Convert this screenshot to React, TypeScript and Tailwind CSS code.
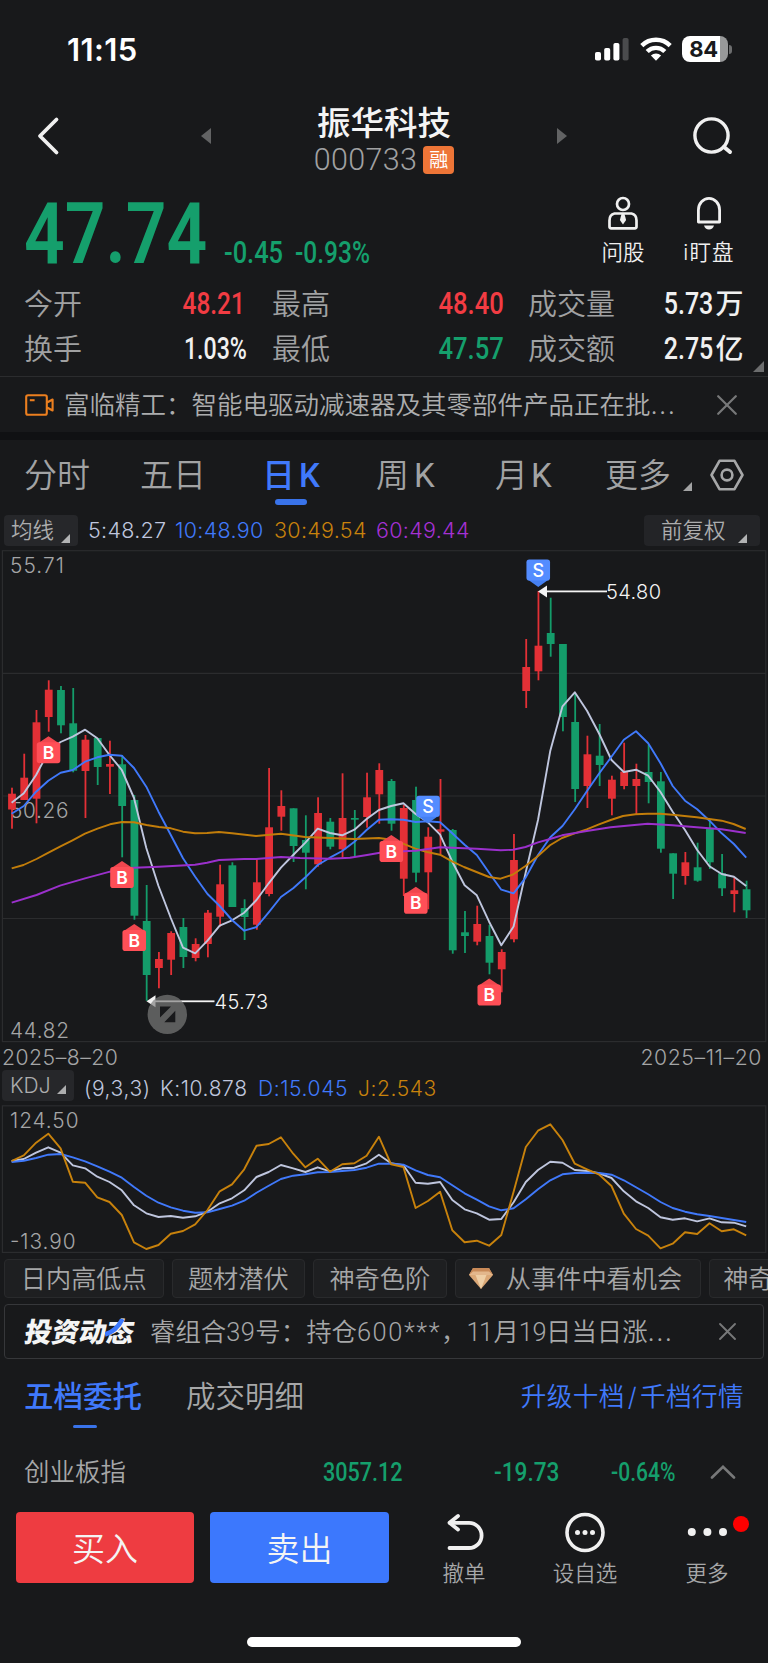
import type { ReactNode } from "react";

type Candle = [high: number, top: number, bottom: number, low: number, up: 0 | 1];

const STEP = 12.243;
const candleX = (i: number) => 12 + i * STEP;
const lineX = (i: number) => 11.6 + i * STEP;

// high, body top, body bottom, low, 1 = red / 0 = green
const CANDLES: Candle[] = [
  [787.7, 793.7, 809.5, 828.7, 1], [753.7, 777.7, 800, 800, 1], [710, 722.3, 798.7, 823.3, 1],
  [680.3, 689.7, 717, 731.7, 1], [686, 690, 725.3, 733.3, 0], [688, 723.3, 770.7, 772.3, 0],
  [735, 739.7, 771, 818, 1], [738, 738, 767, 785, 0], [740.7, 764, 766.7, 794, 1],
  [755, 764.3, 806, 857.3, 0], [795, 800, 915.7, 919.7, 0], [885, 921, 975, 1000.7, 0],
  [952, 959, 968, 988.3, 1], [931.3, 933, 959.7, 975, 1], [918, 927, 957, 968, 0],
  [938.3, 944, 958, 961.3, 1], [910, 912.7, 944, 957.3, 1], [864.7, 884.3, 916.7, 926.7, 1],
  [862.3, 865.3, 907, 907, 0], [899.3, 908, 917, 940, 0], [859.3, 882.3, 924.7, 929.7, 1],
  [768, 827.3, 894, 896.3, 1], [790.3, 806, 816.7, 830.7, 1], [808.3, 808.3, 846, 862, 0],
  [815.3, 840, 852.7, 889.3, 0], [797.3, 813, 864.3, 866.7, 1], [818, 821.7, 846.7, 849.3, 0],
  [773.3, 818, 849.3, 859, 1], [810, 818, 819.7, 856.3, 0], [772.7, 797.3, 817, 827.7, 1],
  [763.3, 770, 794.3, 823.7, 1], [779, 781, 823.7, 830.7, 0], [805, 808, 878.7, 896, 1],
  [786.7, 800, 872.7, 882.3, 0], [827.3, 836.7, 872.3, 909.3, 1], [779, 829.3, 831.7, 854.3, 1],
  [829, 830, 950.3, 953.7, 0], [911, 932.3, 936, 953, 0], [905.7, 924, 941.7, 945.3, 1],
  [925, 936, 962.7, 974.3, 0], [949.3, 952, 969.3, 992.3, 1], [834, 860, 939.3, 942.3, 1],
  [639, 667, 691, 708, 1], [591, 645.7, 671.3, 680.3, 1], [597.7, 633, 644, 656.7, 0],
  [644, 644, 717, 731.3, 0], [694, 722, 789, 802, 0], [735.7, 754.3, 786, 808, 1],
  [724, 755.7, 765, 786, 0], [775.7, 779.7, 798.7, 815.3, 1], [742.7, 771.7, 786, 789.3, 1],
  [763.7, 779, 786, 814, 1], [744.3, 772, 782, 803.3, 0], [772, 781.3, 848.7, 852.7, 0],
  [853.3, 853.3, 873.7, 899, 0], [852, 862.3, 876, 884.7, 1], [842.7, 867.3, 880.7, 881.7, 0],
  [820, 828.7, 862.3, 869, 0], [854, 873.3, 888.3, 896, 0], [877.3, 890.3, 894, 912.3, 1],
  [880.7, 889.3, 910.3, 918, 0],
];

const MA5 = [
  802.7, 793.3, 775, 752, 742, 736.7, 729.7, 738.3, 755, 770, 798, 848, 886, 918, 947.7, 953.3,
  940.7, 925.7, 920.3, 912.7, 900, 883.3, 867.7, 855, 842.7, 828.7, 833, 835.3, 829.7, 819, 810,
  806, 803.3, 814, 822.3, 834.7, 861.7, 885.3, 895.3, 921.7, 945.3, 926.5, 872, 820, 750.7, 706.3,
  692.3, 710.7, 734, 760, 772, 769.7, 775.7, 792, 811.7, 830, 850, 866.3, 874, 876.7, 886,
];

const MA10 = [
  813.7, 806, 791.7, 780.7, 772.7, 770, 761.7, 757.3, 754.7, 755.7, 768, 786.7, 811.7, 835, 858.3,
  876.7, 894, 906, 920, 930.7, 927, 912.3, 897, 888.3, 877.3, 865, 857.7, 851, 841.7, 830, 819.7,
  819.3, 819.7, 822, 821.3, 822.3, 833.3, 844.7, 855, 872.7, 889.7, 893.3, 877.3, 855, 837.3, 826,
  809.3, 791, 773.3, 756.7, 739.7, 731.3, 743.3, 763.3, 786, 800.7, 809.3, 820.7, 833.3, 844, 857.7,
];

const MA30 =
  "11.7,868.3 23.5,865 36.5,859 48.5,852.7 60,846.7 72.5,840.3 85,833.7 97.5,828.7 110,824.3 122,822 134,822.3 146.5,825 159,827 171,828.3 183,831.7 195,833.3 207,833 219,832 232,833.3 256,836 281,833.7 305,837 330,838 354,839 379,838 391.5,839.7 403,843.7 415.5,848.7 427,852 440,854.7 452,861.3 464,867 489,877 500.5,878.7 513,874.5 525.5,866 538,856 550,845.3 562,838 574,833.7 586.7,829.3 599,824.3 610.7,820 623,816 635.5,814.3 647.7,813.7 660,813.7 672.5,814.7 696.7,817.3 721.7,820.7 733.5,824 745.7,829";

const MA60 =
  "11.7,902.7 36.5,895 60,885.7 85,878.3 110,871.7 122,869 134,867.7 159,866.7 195,864.7 207,862.7 219,860 244,859 256,859 281,857 300,858 330,858.7 350,857.7 367,855 380,852.7 403,851.3 415.5,850.7 440,847.3 476.7,848.7 500.7,850.3 513,849.8 525.5,847 538,842.3 550,839 562,835.3 586.7,831 610.7,827.3 647.7,823.7 672.5,825.3 696.7,827.3 721.7,829.3 745.7,833";

// KDJ values are thirds of a pixel below y = 1030
const J = [
  393, 376, 338, 311, 355, 455, 458, 502, 516, 555, 637, 657, 645, 611, 603, 583, 540, 484, 463, 418,
  347, 342, 322, 371, 412, 386, 425, 403, 400, 377, 320, 403, 411, 534, 513, 485, 601, 637, 632, 647,
  615, 485, 351, 302, 283, 330, 401, 418, 434, 468, 551, 597, 617, 655, 641, 607, 612, 580, 604, 598,
  616,
];
const K = [
  393, 387, 368, 352, 368, 406, 415, 440, 456, 481, 526, 550, 561, 558, 563, 559, 545, 520, 505, 481,
  441, 426, 405, 415, 426, 412, 424, 415, 413, 400, 374, 400, 406, 458, 461, 456, 510, 538, 550, 569,
  567, 517, 456, 420, 395, 398, 420, 423, 430, 444, 484, 514, 534, 562, 569, 565, 574, 565, 577, 578,
  589,
];
const D = [
  396, 392, 384, 374, 372, 382, 394, 409, 425, 443, 471, 497, 518, 532, 542, 548, 547, 537, 527, 512,
  488, 467, 447, 437, 433, 427, 426, 423, 420, 413, 401, 401, 404, 421, 435, 442, 466, 490, 509, 529,
  541, 535, 508, 478, 451, 433, 429, 428, 429, 434, 451, 472, 493, 516, 534, 545, 553, 558, 564, 570,
  576,
];

const toPoints = (ys: number[]) => ys.map((y, i) => `${lineX(i).toFixed(1)},${y}`).join(" ");
const toKdj = (ys: number[]) => toPoints(ys.map((y) => +(1030 + y / 3).toFixed(1)));

function Num({ children, className = "" }: { children: ReactNode; className?: string }) {
  return (
    <span className={`inline-block [font-family:Roboto,'Noto_Sans_CJK_SC',sans-serif] font-medium leading-none whitespace-nowrap ${className}`}>
      {children}
    </span>
  );
}

function Corner({ className = "" }: { className?: string }) {
  return (
    <svg viewBox="0 0 9 9" className={`w-[9px] h-[9px] shrink-0 ${className}`}>
      <path d="M9 0V9H0Z" fill="currentColor" />
    </svg>
  );
}

function Close({ className }: { className: string }) {
  return (
    <svg viewBox="0 0 20 20" className={className} fill="none" stroke="#777879" strokeWidth="2.2" strokeLinecap="round">
      <path d="M1.2 1.2 18.8 18.8M18.8 1.2 1.2 18.8" />
    </svg>
  );
}

function StatusBar() {
  return (
    <div className="h-[98px] flex items-center pl-[67px] pr-9 text-white">
      <span className="text-[31px] font-semibold leading-none tracking-[0.4px]">11:15</span>
      <svg viewBox="0 0 36 24" className="ml-auto w-9 h-6" fill="#fff">
        <rect x="1" y="15" width="6" height="8.5" rx="1.8" />
        <rect x="10.2" y="11" width="6" height="12.5" rx="1.8" />
        <rect x="19.4" y="6" width="6" height="17.5" rx="1.8" />
        <rect x="28.6" y="1" width="6" height="22.5" rx="1.8" fill="#4a4b4d" />
      </svg>
      <svg viewBox="0 0 32 24" className="ml-[10px] w-8 h-6" fill="none" stroke="#fff" strokeWidth="4.4">
        <path d="M1.8 8.6a20.2 20.2 0 0 1 28.4 0" />
        <path d="M7.2 14.5a12.5 12.5 0 0 1 17.6 0" />
        <path d="M16 23.8 10.9 18.5a7.4 7.4 0 0 1 10.2 0Z" fill="#fff" stroke="none" />
      </svg>
      <div className="ml-[10px] h-[26px] w-[46px] rounded-[8px] overflow-hidden flex items-center bg-[linear-gradient(90deg,#fff_82%,#98999a_82%)]">
        <span className="w-[43px] text-center text-[22px] font-bold leading-none tracking-[-0.3px] text-[#18191b]">84</span>
      </div>
      <span className="ml-[1px] w-[3px] h-[9px] rounded-r-full bg-[#6c6d6e]" />
    </div>
  );
}

function Header() {
  return (
    <div className="h-[78px] flex items-center pl-9 pr-[34px]">
      <svg viewBox="0 0 24 40" className="w-6 h-10 -mt-[2px]" fill="none" stroke="#f0f0f0" strokeWidth="3.8" strokeLinecap="round" strokeLinejoin="round">
        <path d="M20.5 3.5 4 20 20.5 36.5" />
      </svg>
      <svg viewBox="0 0 10 16" className="ml-[141px] -mt-[2px] w-[10px] h-4">
        <path d="M10 0V16L0 8Z" fill="#626364" />
      </svg>
      <div className="flex-1 self-start pt-[7px] flex flex-col items-center">
        <div className="h-[38px] flex items-center text-[33.5px] font-medium leading-none text-[#f4f4f4]">振华科技</div>
        <div className="mt-[1px] h-8 flex items-center gap-[6px]">
          <Num className="text-[30.5px] font-light! tracking-[0.3px] text-[#a0a1a2] mt-px">000733</Num>
          <span className="w-[31px] h-7 rounded-[4px] bg-[#ee7537] text-white text-[19px] leading-none flex items-center justify-center">融</span>
        </div>
      </div>
      <svg viewBox="0 0 10 16" className="mr-[125px] -mt-[2px] w-[10px] h-4">
        <path d="M0 0V16L10 8Z" fill="#626364" />
      </svg>
      <svg viewBox="0 0 42 40" className="w-[42px] h-10 -mt-[2px]" fill="none" stroke="#f0f0f0" strokeWidth="3.4" strokeLinecap="round">
        <circle cx="19.5" cy="19.5" r="16.6" />
        <path d="M32 31 38 36" strokeWidth="4" />
      </svg>
    </div>
  );
}

function PriceBlock() {
  return (
    <div className="h-[105px] flex justify-between pl-6 pr-[33px]">
      <div className="flex items-baseline pt-[15px] text-[#159f6c]">
        <Num className="w-[200px] text-[86px] font-semibold! origin-left scale-x-[0.83]">47.74</Num>
        <Num className="w-[71px] text-[31px] origin-left scale-x-[0.82]">-0.45</Num>
        <Num className="text-[31px] origin-left scale-x-[0.79]">-0.93%</Num>
      </div>
      <div className="pt-5 flex text-[#f0f0f0] text-[21.5px] leading-none">
        <div className="w-11 flex flex-col items-center">
          <svg viewBox="0 0 32 34" className="w-8 h-[34px]" fill="none" stroke="#f0f0f0" strokeWidth="2.7">
            <circle cx="16" cy="8" r="6" />
            <path d="M7.5 17.5h17q5 1 5 7v6q0 1.8-1.8 1.8H4.3q-1.8 0-1.8-1.8v-6q0-6 5-7Z" strokeLinejoin="round" />
            <path d="M14.5 18h3l1.6 6-3.1 4.5-3.1-4.5Z" fill="#f0f0f0" stroke="none" />
          </svg>
          <span className="mt-[12px] whitespace-nowrap font-[350]">问股</span>
        </div>
        <div className="ml-[38px] w-[52px] flex flex-col items-center">
          <svg viewBox="0 0 32 34" className="w-8 h-[34px]" fill="none" stroke="#f0f0f0" strokeWidth="2.8" strokeLinejoin="round">
            <path d="M5.4 26V14a10.6 11.6 0 0 1 21.2 0V26Z" />
            <path d="M11 29.6h10q-1.2 4-5 4t-5-4Z" fill="#f0f0f0" stroke="none" />
          </svg>
          <span className="mt-[12px] whitespace-nowrap tracking-[1.2px] font-[350]">i盯盘</span>
        </div>
      </div>
    </div>
  );
}

function Stat({ label, value, className, width }: { label: string; value: ReactNode; className: string; width: string }) {
  return (
    <div className={`flex items-center justify-between ${width}`}>
      <span className="text-[29px] font-[350] leading-none text-[#a0a1a2]">{label}</span>
      <Num className={`text-[30.5px] origin-right ${className}`}>{value}</Num>
    </div>
  );
}

// keeps the CJK unit at full width inside a condensed number
function Unit({ children }: { children: string }) {
  return <span className="inline-block w-[35px] ml-[3px] text-[28px] origin-left scale-x-[1.22]">{children}</span>;
}

function Stats() {
  return (
    <div className="relative h-[96px] pt-px px-6 border-b border-[#2b2c2e]">
      <div className="h-[45px] flex">
        <Stat label="今开" value="48.21" width="w-[221px]" className="scale-x-[0.8] text-[#f23c43]" />
        <Stat label="最高" value="48.40" width="ml-[27px] w-[232px]" className="scale-x-[0.84] text-[#f23c43]" />
        <Stat label="成交量" width="ml-6 w-[216px]" className="scale-x-[0.82] text-[#f0f0f0]" value={<>5.73<Unit>万</Unit></>} />
      </div>
      <div className="h-[45px] flex">
        <Stat label="换手" value="1.03%" width="w-[223px]" className="scale-x-[0.76] text-[#f0f0f0]" />
        <Stat label="最低" value="47.57" width="ml-[25px] w-[232px]" className="scale-x-[0.84] text-[#159f6c]" />
        <Stat label="成交额" width="ml-6 w-[216px]" className="scale-x-[0.82] text-[#f0f0f0]" value={<>2.75<Unit>亿</Unit></>} />
      </div>
      <Corner className="absolute right-1 bottom-1 w-[11px]! h-[11px]! text-[#6c6d6e]" />
    </div>
  );
}

function Notice() {
  return (
    <div className="h-[55px] flex items-center pl-[25px] pr-[31px]">
      <svg viewBox="0 0 29 22" className="w-[29px] h-[22px] shrink-0" fill="none" stroke="#ec7f1f" strokeWidth="2.1" strokeLinejoin="round">
        <rect x="1.2" y="1.2" width="20.6" height="19.6" rx="1.8" />
        <path d="M22 8.5 27.6 5.5V16.5L22 13.5" />
        <path d="M4.8 6.2H9.6" />
      </svg>
      <span className="ml-[10px] text-[25.5px] font-[350] leading-none text-[#acadae] whitespace-nowrap">
        富临精工：智能电驱动减速器及其零部件产品正在批<span className="tracking-[1.4px]">...</span>
      </span>
      <Close className="ml-auto w-5 h-5" />
    </div>
  );
}

function PeriodTabs() {
  return (
    <div className="h-[75px] flex pl-6 text-[33px] font-[350] leading-none text-[#a2a3a4] whitespace-nowrap">
      <div className="w-[116px] pt-[19px]">分时</div>
      <div className="w-[122px] pt-[19px]">五日</div>
      <div className="w-[114px] pt-[19px] text-[#4079fb] font-medium relative">
        日<span className="ml-1 [font-family:Roboto]">K</span>
        <span className="absolute left-[13px] top-[59px] w-8 h-[6px] rounded-full bg-[#3973ea]" />
      </div>
      <div className="w-[119px] pt-[19px]">周<span className="ml-[5px] font-normal [font-family:Roboto]">K</span></div>
      <div className="w-[110px] pt-[19px]">月<span className="ml-[3px] font-normal [font-family:Roboto]">K</span></div>
      <div className="pt-[19px]">更多</div>
      <Corner className="ml-3 mt-[42px]" />
      <svg viewBox="0 0 34 32" className="ml-[18px] mt-[19px] w-[34px] h-8" fill="none" stroke="#a6a7a8" strokeWidth="2.6" strokeLinejoin="round">
        <path d="M9.5 1.8H24.5L32.5 16 24.5 30.2H9.5L1.5 16Z" />
        <circle cx="17" cy="16" r="5.4" />
      </svg>
    </div>
  );
}

function MaRow() {
  return (
    <div className="h-[34px] flex pl-1 pr-2 text-[21.5px] leading-none">
      <div className="w-[74px] h-[31px] rounded-[4px] bg-[#26272a] pl-[7px] flex items-center text-[#acadae] font-[350]">
        均线
        <Corner className="ml-[7px] mt-4 text-[#b2b3b4]" />
      </div>
      <div className="ml-[10px] h-[31px] flex items-center font-[350] tracking-[0.3px]">
        <span className="w-[87px] text-[#bfc6de]">5:48.27</span>
        <span className="w-[99px] text-[#4079fb]">10:48.90</span>
        <span className="w-[102px] text-[#c8820c]">30:49.54</span>
        <span className="text-[#a531d4]">60:49.44</span>
      </div>
      <div className="ml-auto w-[116px] h-[31px] rounded-[4px] bg-[#232427] pl-[17px] flex items-center text-[#acadae] font-[350]">
        前复权
        <Corner className="ml-3 mt-4 text-[#b2b3b4]" />
      </div>
    </div>
  );
}

function BuyMark({ i, y }: { i: number; y: number }) {
  const x = candleX(i) - 0.2;
  return (
    <g>
      <path d={`M${x - 10.5} ${y + 7}L${x} ${y}L${x + 10.5} ${y + 7}Z`} fill="#f0464e" />
      <rect x={x - 11.8} y={y + 6} width="23.6" height="21" rx="2.8" fill="#ff4f57" />
      <text x={x} y={y + 22.6} textAnchor="middle" fontSize="17.5" fontWeight="600" fill="#fff">B</text>
    </g>
  );
}

function SellMark({ i, y }: { i: number; y: number }) {
  const x = candleX(i) - 0.2;
  return (
    <g>
      <path d={`M${x - 10.5} ${y + 20}L${x} ${y + 27.5}L${x + 10.5} ${y + 20}Z`} fill="#4580f2" />
      <rect x={x - 11.8} y={y} width="23.6" height="21" rx="2.8" fill="#538cff" />
      <text x={x} y={y + 17.6} textAnchor="middle" fontSize="18" fontWeight="500" fill="#fff">S</text>
    </g>
  );
}

function KLineChart() {
  return (
    <svg viewBox="0 549 768 494" className="block w-[768px] h-[494px] [font-family:Inter,sans-serif]">
      <g fill="none" stroke="#2b2c2e" strokeWidth="1.2">
        <rect x="2.4" y="550.7" width="763.4" height="490.9" />
        <path d="M2 673.3H766M2 796H766M2 918.5H766" />
      </g>
      <g fontSize="20.8" fontWeight="350" fill="#a4a5a6">
        <text x="10" y="572.6" textLength="54">55.71</text>
        <text x="10" y="818.4" textLength="58.5">50.26</text>
        <text x="10" y="1037.8" textLength="59">44.82</text>
      </g>
      {CANDLES.map(([high, top, bottom, low, up], i) => (
        <g key={i} fill={up ? "#e33036" : "#149c6a"}>
          <rect x={candleX(i) - 0.9} y={high} width="1.8" height={low - high} />
          <rect x={candleX(i) - 3.9} y={top} width="7.8" height={bottom - top} />
        </g>
      ))}
      <g fill="none" strokeWidth="1.9" strokeLinejoin="round">
        <polyline points={toPoints(MA5)} stroke="#bfc6de" />
        <polyline points={toPoints(MA10)} stroke="#4079fb" />
        <polyline points={MA30} stroke="#c27d0a" />
        <polyline points={MA60} stroke="#9b30cc" />
      </g>
      <BuyMark i={3} y={736.3} />
      <BuyMark i={9} y={861} />
      <BuyMark i={10} y={924} />
      <BuyMark i={31} y={835} />
      <BuyMark i={33} y={886.7} />
      <BuyMark i={39} y={978.5} />
      <SellMark i={34} y={795.7} />
      <SellMark i={43} y={559.5} />
      <g fill="#f4f4f4" stroke="none" fontSize="20" fontWeight="350">
        <path d="M538 591.4 547 585.4V597.4Z" />
        <rect x="546" y="590.5" width="61" height="1.8" />
        <text x="606" y="599.2" textLength="55">54.80</text>
        <path d="M146.5 1001.3 155.5 995.3V1007.3Z" />
        <rect x="154" y="1000.4" width="60.5" height="1.8" />
        <text x="214.5" y="1008.8" textLength="53.5">45.73</text>
      </g>
      <circle cx="167.3" cy="1014.4" r="19.7" fill="#7d7d7d" fillOpacity="0.68" />
      <path d="M160 1006.5H171L160 1017.5ZM175.3 1010.8V1022.3H164.3Z" fill="#18191b" />
    </svg>
  );
}

function KdjPanel() {
  return (
    <>
      <div className="h-[27px] pt-[4px] pl-[2px] pr-[6px] flex justify-between text-[21.2px] leading-none font-[350] tracking-[0.5px] text-[#a4a5a6]">
        <span>2025–8–20</span>
        <span className="tracking-[0.6px]">2025–11–20</span>
      </div>
      <div className="h-[34px] flex pl-[2px] text-[21px] leading-none font-[350]">
        <div className="w-[72px] h-[31px] rounded-[4px] bg-[#26272a] pl-2 flex items-center text-[#acadae]">
          KDJ
          <Corner className="ml-auto mr-2 mt-2" />
        </div>
        <div className="ml-[10px] pt-[3px] h-[34px] flex items-center whitespace-nowrap tracking-[0.6px]">
          <span className="w-[76px] text-[#bfc6de]">(9,3,3)</span>
          <span className="w-[98px] text-[#bfc6de]">K:10.878</span>
          <span className="w-[100px] text-[#4079fb]">D:15.045</span>
          <span className="text-[#c8820c]">J:2.543</span>
        </div>
      </div>
      <svg viewBox="0 1104 768 150" className="block w-[768px] h-[150px] [font-family:Inter,sans-serif]">
        <rect x="2.4" y="1105.8" width="763.4" height="146.6" fill="none" stroke="#2b2c2e" strokeWidth="1.2" />
        <g fontSize="20.8" fontWeight="350" fill="#a4a5a6">
          <text x="10" y="1127.8" textLength="68.5">124.50</text>
          <text x="10" y="1249" textLength="65.5">-13.90</text>
        </g>
        <g fill="none" strokeWidth="1.9" strokeLinejoin="round">
          <polyline points={toKdj(K)} stroke="#bfc6de" />
          <polyline points={toKdj(D)} stroke="#4079fb" />
          <polyline points={toKdj(J)} stroke="#c8820c" />
        </g>
      </svg>
    </>
  );
}

function Chip({ children, className }: { children: ReactNode; className: string }) {
  return (
    <div className={`h-[39px] pt-[2px] shrink-0 rounded-[4px] border border-[#292a2c] bg-[#1e1f21] flex items-center justify-center whitespace-nowrap ${className}`}>
      {children}
    </div>
  );
}

function Chips() {
  return (
    <div className="mt-[5px] flex gap-2 pl-1 overflow-hidden text-[25.2px] font-[350] leading-none text-[#a6a7a8]">
      <Chip className="w-[159.5px]">日内高低点</Chip>
      <Chip className="w-[133.5px]">题材潜伏</Chip>
      <Chip className="w-[133.5px]">神奇色阶</Chip>
      <Chip className="w-[246px]">
        <svg viewBox="0 0 24 22" className="w-6 h-[22px] mr-[13px] -ml-[4px] -mt-[4px]">
          <path d="M4 1H20L24 8 12 22 0 8Z" fill="#dba877" />
          <path d="M4 1H20L24 8H0Z" fill="#c98a58" />
          <path d="M0 8H24L20 4.5H4Z" fill="#e3b78c" />
          <path d="M6.5 8H17.5L12 22Z" fill="#efcfa6" />
        </svg>
        从事件中看机会
      </Chip>
      <Chip className="w-[130px]">神奇色阶</Chip>
    </div>
  );
}

function Banner() {
  return (
    <div className="mt-[6px] mx-1 h-[55px] rounded-[4px] border border-[#36373a] flex items-center pl-5 pr-[27px]">
      <div className="relative mt-[3px] w-[109px] text-[27.2px] font-black leading-none text-[#f4f4f4] whitespace-nowrap">
        <span className="inline-block -skew-x-[10deg]">投资动态</span>
        <svg viewBox="0 0 20 18" className="absolute left-[80px] top-0 w-5 h-[18px]" fill="none" stroke="#3c78fd" strokeWidth="4.6">
          <path d="M17.5 0Q11 12.500 0 15.500" />
        </svg>
      </div>
      <span className="mt-px ml-4 text-[25.4px] font-[350] leading-none text-[#a6a7a8] whitespace-nowrap">
        睿组合<Num className="font-light! tracking-[0.5px]">39</Num>号：持仓<Num className="font-light! tracking-[1.6px]">600***</Num>，
        <Num className="font-light! tracking-[-1.6px] mr-[2px]">11</Num>月<Num className="font-light! tracking-[-0.5px]">19</Num>日当日涨<span className="tracking-[1.4px]">...</span>
      </span>
      <Close className="ml-auto w-[17px] h-[17px]" />
    </div>
  );
}

function OrderTabs() {
  return (
    <div className="h-[81px] flex pl-6 pr-6 leading-none">
      <div className="relative w-[162px] pt-[23px] text-[29.5px] font-medium text-[#4079fb]">
        五档委托
        <span className="absolute left-[49px] top-[66px] w-6 h-[3px] rounded-full bg-[#3973ea]" />
      </div>
      <div className="pt-[23px] text-[29.5px] font-[350] text-[#a6a7a8]">成交明细</div>
      <div className="ml-auto pt-[25px] text-[25.6px] font-[350] text-[#4079fb] tracking-[0.4px]">
        升级十档<span className="mx-[3px]">/</span>千档行情
      </div>
    </div>
  );
}

function IndexRow() {
  return (
    <div className="h-[63px] flex items-center pl-6 pr-8 text-[#159f6c]">
      <span className="w-[299px] text-[25.5px] font-[350] leading-none text-[#a6a7a8]">创业板指</span>
      <Num className="w-[171px] text-[26px] origin-left scale-x-[0.83]">3057.12</Num>
      <Num className="w-[117px] text-[26px] origin-left scale-x-[0.87]">-19.73</Num>
      <Num className="text-[26px] origin-left scale-x-[0.81]">-0.64%</Num>
      <svg viewBox="0 0 26 14" className="ml-auto w-[26px] h-[14px]" fill="none" stroke="#777879" strokeWidth="2.6" strokeLinecap="round">
        <path d="M2 12.500 13 1.800 24 12.500" />
      </svg>
    </div>
  );
}

function ActionBar() {
  return (
    <div className="mt-[9px] flex pl-4 text-[21.5px] font-[350] leading-none text-[#a6a7a8]">
      <button className="w-[178px] h-[71px] pt-[3px] rounded-[4px] bg-[#ee3c41] text-[33px] font-[350] text-[#f4f4f4]">买入</button>
      <button className="ml-4 w-[179px] h-[71px] pt-[3px] rounded-[4px] bg-[#3c78fd] text-[33px] font-[350] text-[#f4f4f4]">卖出</button>
      <div className="ml-[53px] w-11 flex flex-col items-center">
        <svg viewBox="0 0 42 42" className="w-[42px] h-[42px]" fill="none" stroke="#f0f0f0" strokeWidth="3.8" strokeLinecap="round" strokeLinejoin="round">
          <path d="M15 4 6.500 10.800 15 17.600" />
          <path d="M7 10.800H26A12.600 12.600 0 0 1 26 36H6.500" />
        </svg>
        <span className="mt-[9px]">撤单</span>
      </div>
      <div className="ml-[66px] w-[66px] flex flex-col items-center">
        <svg viewBox="0 0 42 42" className="w-[42px] h-[42px]">
          <circle cx="21" cy="20.500" r="18" fill="none" stroke="#f0f0f0" strokeWidth="3.600" />
          <circle cx="13.500" cy="20.500" r="2.500" fill="#f0f0f0" />
          <circle cx="21" cy="20.500" r="2.500" fill="#f0f0f0" />
          <circle cx="28.500" cy="20.500" r="2.500" fill="#f0f0f0" />
        </svg>
        <span className="mt-[9px] whitespace-nowrap">设自选</span>
      </div>
      <div className="relative ml-[67px] w-11 flex flex-col items-center">
        <svg viewBox="0 0 42 42" className="w-[42px] h-[42px]" fill="#f0f0f0">
          <circle cx="5.800" cy="20" r="4" />
          <circle cx="21.400" cy="20" r="4" />
          <circle cx="37" cy="20" r="4" />
        </svg>
        <span className="absolute left-[48px] top-1 w-4 h-4 rounded-full bg-[#fe0000]" />
        <span className="mt-[9px]">更多</span>
      </div>
    </div>
  );
}

export default function App() {
  return (
    <div className="w-[768px] h-[1663px] overflow-hidden bg-[#18191b] [font-family:Inter,'Noto_Sans_CJK_SC',sans-serif]">
      <StatusBar />
      <Header />
      <PriceBlock />
      <Stats />
      <Notice />
      <div className="h-2 bg-[#101113]" />
      <PeriodTabs />
      <MaRow />
      <KLineChart />
      <KdjPanel />
      <Chips />
      <Banner />
      <OrderTabs />
      <IndexRow />
      <ActionBar />
      <div className="mt-[52px] mx-auto w-[274px] h-[10px] rounded-full bg-white" />
    </div>
  );
}
